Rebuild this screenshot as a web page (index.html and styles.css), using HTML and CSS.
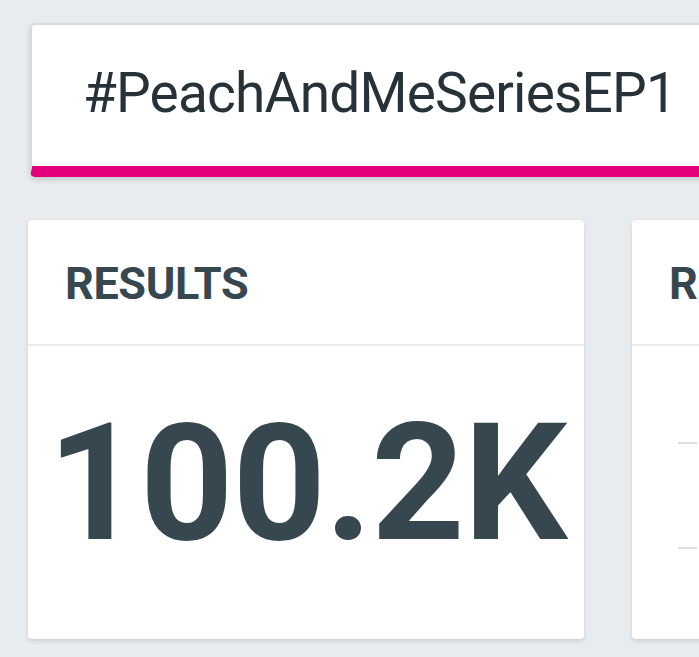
FILE: index.html
```html
<!DOCTYPE html>
<html lang="en">
<head>
<meta charset="utf-8">
<title>Hashtag dashboard</title>
<link rel="stylesheet" href="styles.css">
</head>
<body>
  <main class="dashboard">
    <header class="tag-card">
      <h1 class="tag-title">#PeachAndMeSeriesEP1</h1>
    </header>

    <section class="stat-card">
      <h2 class="stat-head">RESULTS</h2>
      <div class="stat-body">
        <div class="stat-value">100.2K</div>
      </div>
    </section>

    <section class="stat-card">
      <h2 class="stat-head">REACH</h2>
      <div class="stat-body chart">
        <div class="chart-axis">
          <span class="tick"></span>
          <span class="tick"></span>
          <span class="tick"></span>
        </div>
      </div>
    </section>
  </main>
</body>
</html>
```

FILE: styles.css
```css
html, body {
  margin: 0;
  padding: 0;
}

body {
  background: #e9ecef;
  font-family: Roboto, "Liberation Sans", sans-serif;
  overflow: hidden;
  width: 699px;
  height: 657px;
}

.dashboard {
  display: grid;
  grid-template-columns: 556px 556px;
  column-gap: 48px;
  row-gap: 43px;
  padding: 23px 0 0 28px;
  width: 1160px;
}

/* hashtag banner across the top */
.tag-card {
  grid-column: 1 / span 2;
  margin-left: 2px;
  background: #ffffff;
  border: 2px solid #d6dadd;
  border-bottom: 11px solid #e4007c;
  border-radius: 5px;
  box-shadow: 0 3px 5px rgba(40, 50, 60, 0.18);
  padding: 36px 0 41px 51px;
}

.tag-title {
  margin: 0;
  font-weight: 400;
  font-size: 55px;
  line-height: 64px;
  letter-spacing: -0.8px;
  color: #263238;
  white-space: nowrap;
}

/* metric cards */
.stat-card {
  background: #ffffff;
  border-radius: 4px;
  box-shadow: 0 2px 4px rgba(40, 50, 60, 0.16);
  height: 419px;
  display: flex;
  flex-direction: column;
  overflow: hidden;
}

.stat-head {
  margin: 0;
  padding: 38px 0 34px 37px;
  font-size: 45px;
  line-height: 52px;
  font-weight: 700;
  letter-spacing: -0.4px;
  color: #37474f;
  border-bottom: 2px solid #e9ecef;
  white-space: nowrap;
}

.stat-body {
  flex: 1;
}

.stat-value {
  padding-top: 56px;
  text-align: center;
  font-size: 163px;
  line-height: 163px;
  font-weight: 700;
  letter-spacing: -1px;
  color: #37474f;
  padding-left: 2px;
}

/* y-axis tick marks of the reach chart */
.chart-axis {
  display: flex;
  flex-direction: column;
  gap: 103px;
  padding: 96px 0 0 46px;
}

.tick {
  display: block;
  width: 19px;
  height: 2px;
  background: #dcdfe2;
}
```
